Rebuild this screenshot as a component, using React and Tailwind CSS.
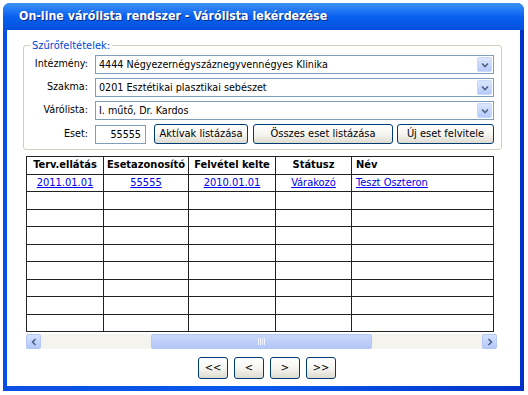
import React from "react";

const font = { fontFamily: '"DejaVu Sans Condensed", "DejaVu Sans", sans-serif' };

function Select({ value }) {
  return (
    <div className="flex h-[19px] w-[399px] items-stretch border border-[#7f9db9] bg-white">
      <div className="flex-1 truncate pl-[3px] text-[10.7px] leading-[17px] text-black">{value}</div>
      <div className="m-[1px] flex w-[15px] items-center justify-center rounded-[2px] border border-[#c7d6fb] bg-gradient-to-b from-[#dce6fd] to-[#b6cafa]">
        <svg width="8" height="6" viewBox="0 0 8 6">
          <path d="M1 1.5 L4 4.5 L7 1.5" fill="none" stroke="#4d6185" strokeWidth="1.6" />
        </svg>
      </div>
    </div>
  );
}

function XpButton({ children, className }) {
  return (
    <button
      className={
        "flex h-[20px] items-center justify-center rounded-[3px] border border-[#003c74] bg-gradient-to-b from-white via-[#f6f5f0] to-[#dedbd0] text-[11px] text-black " +
        className
      }
    >
      {children}
    </button>
  );
}

// empty rows under the data row, heights alternate like the original grid
const rowHeights = ["h-[18px]", "h-[17px]", "h-[18px]", "h-[17px]", "h-[18px]", "h-[17px]", "h-[18px]", "h-[17px]"];

export default function App() {
  return (
    <div className="h-[395px] w-[528px] bg-white" style={font}>
      <div className="ml-[3px] mt-[3px] flex h-[388px] w-[521px] flex-col rounded-t-[7px] bg-gradient-to-r from-[#0a4fe3] via-[#0758ee] to-[#0332c8]">
        {/* TITLE BAR */}
        <div className="flex h-[27px] items-center rounded-t-[7px] bg-gradient-to-b from-[#3d91f7] via-[#0a61f0] to-[#0450dc] pl-[16px]">
          <span className="text-[12.3px] font-bold text-white [text-shadow:1px_1px_0_#0a2a8a]">
            On-line várólista rendszer - Várólista lekérdezése
          </span>
        </div>

        {/* BODY */}
        <div className="mx-[4px] mb-[5px] flex-1 bg-white">
          <fieldset className="ml-[16px] mt-[9px] w-[479px] rounded-[3px] border border-[#d0d0bf] pb-[5px]">
            <legend className="ml-[6px] px-[2px] text-[11px] leading-[13px] text-[#0046d5]">Szűrőfeltételek:</legend>
            <div className="mt-[3px] flex flex-col gap-[4px] text-[10.7px] text-black">
              <div className="flex items-center">
                <span className="w-[64px] text-right">Intézmény:</span>
                <div className="ml-[7px]">
                  <Select value="4444 Négyezernégyszáznegyvennégyes Klinika" />
                </div>
              </div>
              <div className="flex items-center">
                <span className="w-[64px] text-right">Szakma:</span>
                <div className="ml-[7px]">
                  <Select value="0201 Esztétikai plasztikai sebészet" />
                </div>
              </div>
              <div className="flex items-center">
                <span className="w-[64px] text-right">Várólista:</span>
                <div className="ml-[7px]">
                  <Select value="I. műtő, Dr. Kardos" />
                </div>
              </div>
              <div className="flex items-center">
                <span className="w-[64px] text-right">Eset:</span>
                <div className="ml-[7px] h-[19px] w-[51px] border border-[#7f9db9] pr-[4px] text-right leading-[17px]">55555</div>
                <XpButton className="ml-[8px] w-[94px]">Aktívak listázása</XpButton>
                <XpButton className="ml-[5px] w-[140px]">Összes eset listázása</XpButton>
                <XpButton className="ml-[4px] w-[97px]">Új eset felvitele</XpButton>
              </div>
            </div>
          </fieldset>

          {/* TABLE */}
          <div className="ml-[19px] mt-[6px] w-[471px]">
            <table className="w-[467px] table-fixed border-collapse text-[11px]">
              <colgroup>
                <col className="w-[77px]" />
                <col className="w-[85px]" />
                <col className="w-[87px]" />
                <col className="w-[76px]" />
                <col className="w-[142px]" />
              </colgroup>
              <thead>
                <tr className="h-[17px]">
                  <th className="border border-[#222] p-0 text-center font-bold">Terv.ellátás</th>
                  <th className="border border-[#222] p-0 text-center font-bold">Esetazonosító</th>
                  <th className="border border-[#222] p-0 text-center font-bold">Felvétel kelte</th>
                  <th className="border border-[#222] p-0 text-center font-bold">Státusz</th>
                  <th className="border border-[#222] p-0 pl-[4px] text-left font-bold">Név</th>
                </tr>
              </thead>
              <tbody>
                <tr className="h-[17px]">
                  <td className="border border-[#222] p-0 text-center text-[#0000ee] underline">2011.01.01</td>
                  <td className="border border-[#222] p-0 text-center text-[#0000ee] underline">55555</td>
                  <td className="border border-[#222] p-0 text-center text-[#0000ee] underline">2010.01.01</td>
                  <td className="border border-[#222] p-0 text-center text-[#0000ee] underline">Várakozó</td>
                  <td className="border border-[#222] p-0 pl-[4px] text-[#0000ee] underline">Teszt Oszteron</td>
                </tr>
                {rowHeights.map((h, i) => (
                  <tr key={i} className={h}>
                    <td className="border border-[#222] p-0"></td>
                    <td className="border border-[#222] p-0"></td>
                    <td className="border border-[#222] p-0"></td>
                    <td className="border border-[#222] p-0"></td>
                    <td className="border border-[#222] p-0"></td>
                  </tr>
                ))}
              </tbody>
            </table>

            {/* SCROLLBAR */}
            <div className="mt-[2px] flex h-[15px] items-stretch bg-[#f4f3ee]">
              <div className="flex w-[15px] items-center justify-center rounded-[2px] border border-[#b4c8f6] bg-gradient-to-b from-[#d6e2fd] to-[#b3c8f8]">
                <svg width="6" height="8" viewBox="0 0 6 8">
                  <path d="M4.5 1 L1.5 4 L4.5 7" fill="none" stroke="#4d6185" strokeWidth="1.6" />
                </svg>
              </div>
              <div className="flex-1 px-[110px] py-0">
                <div className="flex h-full items-center justify-center rounded-[2px] border border-[#b4c8f6] bg-gradient-to-b from-[#c9d8fc] to-[#b2c7f8]">
                  <div className="flex gap-[1px]">
                    <span className="h-[7px] w-[1px] bg-[#eef3ff]"></span>
                    <span className="h-[7px] w-[1px] bg-[#eef3ff]"></span>
                    <span className="h-[7px] w-[1px] bg-[#eef3ff]"></span>
                    <span className="h-[7px] w-[1px] bg-[#eef3ff]"></span>
                  </div>
                </div>
              </div>
              <div className="flex w-[15px] items-center justify-center rounded-[2px] border border-[#b4c8f6] bg-gradient-to-b from-[#d6e2fd] to-[#b3c8f8]">
                <svg width="6" height="8" viewBox="0 0 6 8">
                  <path d="M1.5 1 L4.5 4 L1.5 7" fill="none" stroke="#4d6185" strokeWidth="1.6" />
                </svg>
              </div>
            </div>
          </div>

          {/* PAGINATION */}
          <div className="mt-[8px] flex justify-center gap-[6px] pl-[7px] text-[11px]">
            <XpButton className="h-[22px] w-[30px]">&lt;&lt;</XpButton>
            <XpButton className="h-[22px] w-[30px]">&lt;</XpButton>
            <XpButton className="h-[22px] w-[30px]">&gt;</XpButton>
            <XpButton className="h-[22px] w-[30px]">&gt;&gt;</XpButton>
          </div>
        </div>
      </div>
    </div>
  );
}
